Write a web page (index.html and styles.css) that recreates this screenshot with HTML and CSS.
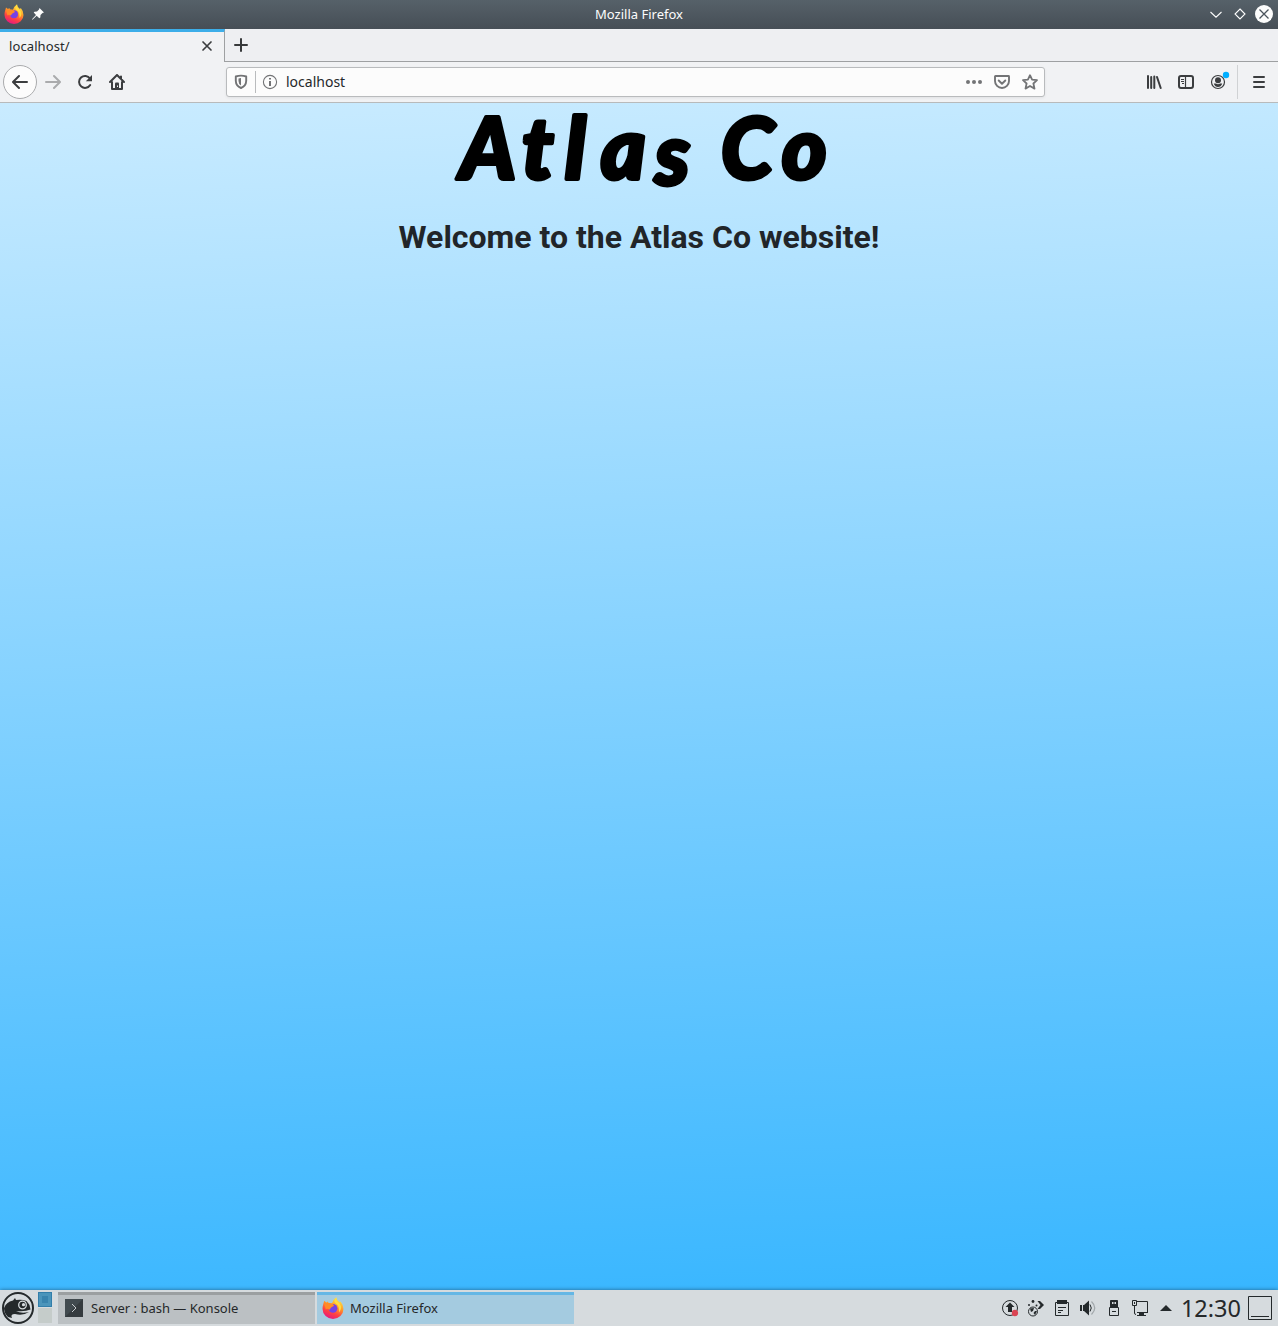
FILE: index.html
```
<!DOCTYPE html>
<html lang="en">
<head>
<meta charset="utf-8">
<title>Mozilla Firefox</title>
<link rel="stylesheet" href="styles.css">
</head>
<body>
<svg width="0" height="0" class="defs" aria-hidden="true">
  <defs>
    <linearGradient id="flame" x1=".75" y1="0" x2=".3" y2="1"><stop offset="0" stop-color="#fff04a"/><stop offset=".4" stop-color="#ff9a28"/><stop offset=".7" stop-color="#ff4242"/><stop offset="1" stop-color="#e31587"/></linearGradient>
    <symbol id="firefox" viewBox="0 0 20 20">
      <path d="M1 7 L2 3.5 4 5 5.3 4 6 5.5 9 5.8 Q10 2.5 13 .3 Q13.2 3 16 5 L16.8 4 Q19.5 7 19.5 11 A9.5 9 0 0 1 .5 11 Q.4 9 1 7Z" fill="url(#flame)"/>
      <circle cx="10" cy="10.300" r="4" fill="#7542e5"/>
      <path d="M2 6 5.5 5.5 9.5 6 11 8 8.3 9.5 6.8 11.5 Q4.5 10 3.5 11.5Z" fill="#ff8b27"/>
      <path d="M12.500 1 Q13 4 16 6 Q19 10 15.500 14 Q16 8 12.500 6 Q10 4 12.500 1" fill="#ffdc3e"/>
    </symbol>
  </defs>
</svg>
<div class="window">
  <header class="titlebar">
    <div class="title-left">
      <svg width="20" height="20"><use href="#firefox"/></svg>
      <svg width="14" height="14" viewBox="0 0 14 14"><path d="M8.5 1 13 5.5 11.5 6 9.5 8 9.3 10.5 8.3 11.3 5.7 8.7 1.5 12.7 1 12.2 5 8 2.7 5.5 3.5 4.7 6 4.5 8 2.5Z" fill="#fcfcfc"/></svg>
    </div>
    <div class="title">Mozilla Firefox</div>
    <div class="title-right">
      <svg width="66" height="20" viewBox="0 0 66 20" fill="none" stroke="#fcfcfc" stroke-width="1.1"><path d="M3.5 8 9 13.2 14.500 8M33 5 38 10 33 15 28 10Z"/><circle cx="57" cy="10" r="9" fill="#fcfcfc" stroke="none"/><path d="M52.500 5.500 61.500 14.500M61.500 5.500 52.500 14.500" stroke="#4b545c" stroke-width="1.3"/></svg>
    </div>
  </header>
  <div class="tabs">
    <div class="tab"><span>localhost/</span><svg width="12" height="12" viewBox="0 0 12 12" stroke="#3b3d3f" stroke-width="1.7" stroke-linecap="round"><path d="M2 2 10 10M10 2 2 10"/></svg></div>
    <div class="tabstrip"><svg width="16" height="16" viewBox="0 0 16 16" stroke="#37393b" stroke-width="2" stroke-linecap="round"><path d="M8 2V14M2 8H14"/></svg></div>
  </div>
  <nav class="toolbar">
    <div class="nav-buttons">
      <div class="back"><svg width="16" height="16" viewBox="0 0 16 16"><path d="M15 8H1.500M7 2 1 8 7 14" fill="none" stroke="#3b3d3f" stroke-width="2" stroke-linecap="round" stroke-linejoin="round"/></svg></div>
      <svg width="16" height="16" viewBox="0 0 16 16"><path d="M1 8H14.500M9 2 15 8 9 14" fill="none" stroke="#aaabad" stroke-width="2" stroke-linecap="round" stroke-linejoin="round"/></svg>
      <svg width="16" height="16" viewBox="0 0 16 16"><path d="M13.200 11A6 6 0 1 1 13 4.500" fill="none" stroke="#3b3d3f" stroke-width="2" stroke-linecap="round"/><path d="M15 1V7.200H8.800Z" fill="#3b3d3f"/></svg>
      <svg width="16" height="16" viewBox="0 0 16 16"><path d="M1 8 8 1 15 8M3 8V15H13V8M12 2.500V5" fill="none" stroke="#3b3d3f" stroke-width="2" stroke-linecap="round" stroke-linejoin="round"/><path d="M6 15V9.500Q6 8.500 7 8.500H9Q10 8.500 10 9.500V15Z" fill="#3b3d3f"/><path d="M8 11.500H9V13H8Z" fill="#f1f2f4"/></svg>
    </div>
    <div class="urlbar">
      <svg width="14" height="16" viewBox="0 0 14 16"><path d="M1.800 2.500Q7 .8 12.200 2.500V7Q12 12 7 14 Q2 12 1.800 7Z" fill="none" stroke="#727375" stroke-width="1.900" stroke-linejoin="round"/><path d="M7 4V11.500Q4.500 10 4.500 7V4.500Z" fill="#727375"/></svg>
      <i class="divider"></i>
      <svg width="16" height="16" viewBox="0 0 16 16"><circle cx="8" cy="8" r="6.600" fill="none" stroke="#727375" stroke-width="1.100"/><path d="M7 4H9V5.500H7ZM7 7H9V12H7Z" fill="#727375"/></svg>
      <span class="url">localhost</span>
      <div class="url-actions">
        <svg width="16" height="16" viewBox="0 0 16 16" fill="#737476"><circle cx="2" cy="8" r="2"/><circle cx="8" cy="8" r="2"/><circle cx="14" cy="8" r="2"/></svg>
        <svg width="16" height="16" viewBox="0 0 16 16" fill="none" stroke="#737476" stroke-width="1.900" stroke-linecap="round" stroke-linejoin="round"><path d="M1.500 2H14.500Q15 2 15 2.500V7A7 7 0 0 1 1 7V2.500Q1 2 1.500 2ZM4.700 6.500 8 9.700 11.300 6.500"/></svg>
        <svg width="16" height="16" viewBox="0 0 16 16"><path d="M8 1.200 10.100 5.700 15 6.200 11.400 9.500 12.500 14.600 8 12 3.500 14.600 4.600 9.500 1 6.200 5.900 5.700Z" fill="none" stroke="#737476" stroke-width="1.800" stroke-linejoin="round"/></svg>
      </div>
    </div>
    <div class="tools">
      <svg width="16" height="16" viewBox="0 0 16 16" stroke="#3b3d3f" stroke-linecap="round"><path d="M2 2V14M5.200 3V14M8.300 2.500V14" stroke-width="2"/><path d="M11 3 14.700 14" stroke-width="2"/></svg>
      <svg width="16" height="16" viewBox="0 0 16 16" stroke="#3b3d3f" fill="none"><rect x="1" y="2" width="14" height="12" rx="2" stroke-width="2"/><path d="M7.500 2V14M3 5.500H6M3 7.500H6M4 9.500H6" stroke-width="1.200"/></svg>
      <svg width="20" height="20" viewBox="0 0 20 20" class="account"><circle cx="8" cy="11" r="6.500" fill="none" stroke="#3b3d3f" stroke-width="1.200"/><circle cx="8" cy="9.300" r="3" fill="#3b3d3f"/><path d="M3.700 12.500H6Q8 14 10 12.500H12.300Q11 16 8 16 T3.700 12.500" fill="#3b3d3f"/><circle cx="16" cy="4" r="3.200" fill="#00aeff"/></svg>
      <i class="tool-divider"></i>
      <svg width="12" height="14" viewBox="0 0 12 14" stroke="#3b3d3f" stroke-width="2" stroke-linecap="round"><path d="M1 2H11M1 7H11M1 12H11"/></svg>
    </div>
  </nav>
  <main class="page">
    <svg class="logo" width="400" height="100" viewBox="440 103 400 100" role="img" aria-label="Atlas Co"><text class="wordmark" x="461 523 566 602 656 695 722 783" y="179 179 179 179 185 179 179 179">Atlas Co</text></svg>
    <h1>Welcome to the Atlas Co website!</h1>
  </main>
  <footer class="taskbar">
    <svg class="launcher" width="34" height="34" viewBox="0 0 34 34"><circle cx="17" cy="17" r="15" fill="none" stroke="#24292b" stroke-width="2"/><path d="M3 17Q5 11 12 9.500L14 7 15 9 Q21 8 25.500 10 L28.500 14 29.500 18.500 Q24 21 15 20 Q20 23 28 21 Q22 25 14 23 Q9 23 11 27 L7 26 Q3 22 3 17Z" fill="#24292b"/><circle cx="21.500" cy="14" r="3.800" fill="#24292b" stroke="#d6dbde" stroke-width="1.300"/><circle cx="22.500" cy="13.700" r="1.600" fill="#d6dbde"/></svg>
    <div class="pager"><i></i><i></i></div>
    <div class="task"><svg width="18" height="18" viewBox="0 0 18 18"><path d="M0 0H18V18H0Z" fill="#414a4f"/><path d="M18 0V18H0Z" fill="#353b3f"/><path d="M7 5 11 9 7 13" fill="none" stroke="#c8cdd0"/></svg><span>Server : bash — Konsole</span></div>
    <div class="task active"><svg width="22" height="22"><use href="#firefox"/></svg><span>Mozilla Firefox</span></div>
    <div class="tray">
      <svg width="18" height="18" viewBox="0 0 18 18"><circle cx="9" cy="9" r="7.500" fill="none" stroke="#24292b"/><path d="M9 3.500 13.500 8H11V13H7V8H4.500Z" fill="#24292b"/><circle cx="14" cy="14" r="3.200" fill="#da4453"/></svg>
      <svg width="18" height="18" viewBox="0 0 18 18" fill="#24292b"><circle cx="6" cy="12.500" r="4.500" fill="none" stroke="#24292b"/><path d="M3 9.500 7 9 6 12 4 13ZM8 12H10L8 16 6.500 14ZM10.500 2H13L17 6 13 10H10.500L13.500 6Z"/><circle cx="6" cy="2.500" r="1.400"/><circle cx="2" cy="6" r="1"/><circle cx="9.500" cy="6.500" r="1"/></svg>
      <svg width="18" height="18" viewBox="0 0 18 18"><path d="M2.500 3.500H15.500V16.500H2.500Z" fill="none" stroke="#24292b"/><path d="M4 1H14V5H4Z" fill="#24292b"/><path d="M5 8.500H13M5 11.500H10M5 13.500H8" stroke="#24292b"/></svg>
      <svg width="18" height="18" viewBox="0 0 18 18"><path d="M1 6H3V12H1ZM4 6H5L10 1.500V16.500L5 12H4Z" fill="#24292b"/><path d="M11 5.500Q13.500 9 11 12.500" fill="none" stroke="#24292b"/><path d="M12.500 2.500Q19 9 12.500 15.500" fill="none" stroke="#a1a7aa" stroke-width="1.200"/></svg>
      <svg width="18" height="18" viewBox="0 0 18 18"><path d="M5.500 1.500H12.500V8H5.500Z" fill="#24292b" stroke="#24292b"/><path d="M7 3H8.500V5H7ZM9.500 3H11V5H9.500Z" fill="#d6dbde"/><path d="M4.500 8.500H13.500V16.500H4.500ZM7 12.500H11" fill="none" stroke="#24292b"/></svg>
      <svg width="18" height="18" viewBox="0 0 18 18"><path d="M1.500 1.500H5.500V6.500H1.500ZM3.500 3V5M6 2.500H16.500V13.500H6M3.500 7V14Q3.500 15.500 5 15.500" fill="none" stroke="#24292b"/><path d="M6 13H17V14H13V16H15V17H6V16H8V14H6Z" fill="#24292b"/></svg>
      <svg width="18" height="18" viewBox="0 0 18 18"><path d="M3 12 9 6 15 12Z" fill="#24292b"/></svg>
    </div>
    <time class="clock">12:30</time>
    <svg class="desktop" width="24" height="24" viewBox="0 0 24 24"><path d="M.5 .5H23.500V23.500H.5ZM3 20.500H21" fill="none" stroke="#24292b"/></svg>
  </footer>
</div>
</body>
</html>
```
FILE: styles.css
```
* { box-sizing: border-box; }
body { margin: 0; font-family: "Noto Sans", sans-serif; font-size: 13px; color: #25282a; }
svg { display: block; flex: none; }
.defs { position: absolute; }
.window { height: 1326px; display: flex; flex-direction: column; overflow: hidden; }

.titlebar { height: 29px; flex: none; display: grid; grid-template-columns: 1fr auto 1fr; align-items: center; padding-bottom: 2px; background: linear-gradient(#566169, #464e56); color: #fcfcfc; }
.title-left { display: flex; align-items: center; gap: 7px; padding-left: 4px; }
.title-right { display: flex; justify-content: flex-end; padding-right: 5px; }

.tabs { height: 33px; flex: none; display: flex; background: #eeeff2; }
.tab { width: 225px; display: flex; align-items: center; justify-content: space-between; padding: 0 11px 2px 9px; border-top: 3px solid #3daee9; border-right: 1px solid #9ea0a2; background: #f1f2f4; }
.tab span { letter-spacing: .1px; }
.tabstrip { flex: 1; display: flex; align-items: center; padding-left: 8px; border-bottom: 1px solid #9ea0a2; }

.toolbar { height: 41px; flex: none; display: flex; align-items: center; background: #f1f2f4; border-bottom: 1px solid #b8babb; }
.nav-buttons { width: 226px; display: flex; align-items: center; gap: 16px; padding-left: 3px; }
.back { width: 34px; height: 34px; margin-right: -8px; display: flex; align-items: center; justify-content: center; border: 1px solid #aaabad; border-radius: 50%; background: #fcfcfc; }
.urlbar { width: 819px; height: 30px; display: flex; align-items: center; padding: 0 6px 0 7px; border: 1px solid #b9bbbd; border-radius: 3px; background: #fcfcfc; box-shadow: 0 1px 3px #0001; }
.divider { width: 1px; height: 22px; margin: 0 6px 0 7px; background: #b9bbbd; }
.url { margin-left: 8px; padding-bottom: 2px; font-size: 14px; }
.url-actions { display: flex; gap: 12px; margin-left: auto; }
.tools { margin-left: auto; display: flex; align-items: center; padding-right: 13px; gap: 16px; }
.account { margin: 0 -5px 2px 0; }
.tool-divider { width: 1px; height: 34px; margin: 0 -1px 0 -4px; background: #d0d2d4; }

.page { flex: 1; display: flex; flex-direction: column; align-items: center; background: linear-gradient(177.500deg, #c9ebff 0%, #38b6ff 100%); }
.logo { overflow: visible; }
.wordmark { font-family: Lato, sans-serif; font-size: 85px; font-weight: 900; font-style: italic; fill: #000; stroke: #000; stroke-width: 4px; stroke-linejoin: round; }
.page h1 { margin: 14px 0 0; font: 700 32px/40px Roboto, sans-serif; color: #212529; }

.taskbar { height: 36px; flex: none; display: flex; align-items: center; background: #d6dbde; box-shadow: 0 0 4px #0007; z-index: 1; }
.launcher { margin-left: 1px; }
.pager { display: flex; flex-direction: column; gap: 1px; width: 14px; margin: 0 6px 2px 3px; }
.pager i { height: 15px; background: #c5ccca; }
.pager i:first-child { background: #3984ae; border: 1px solid #327eaa; box-shadow: inset 0 0 0 3px #4b95bb; }
.task { width: 257px; height: 32px; margin-right: 2px; display: flex; align-items: center; gap: 8px; padding: 0 7px 3px; border-top: 3px solid #9b9fa1; background: #bbc0c3; }
.task.active { padding-left: 5px; gap: 6px; background: #a4cbe0; border-color: #65b7e5; }
.tray { display: flex; gap: 8px; margin-left: auto; }
.clock { margin-left: 6px; font-size: 23.5px; line-height: 36px; }
.desktop { margin: 0 6px 0 7px; }
```
